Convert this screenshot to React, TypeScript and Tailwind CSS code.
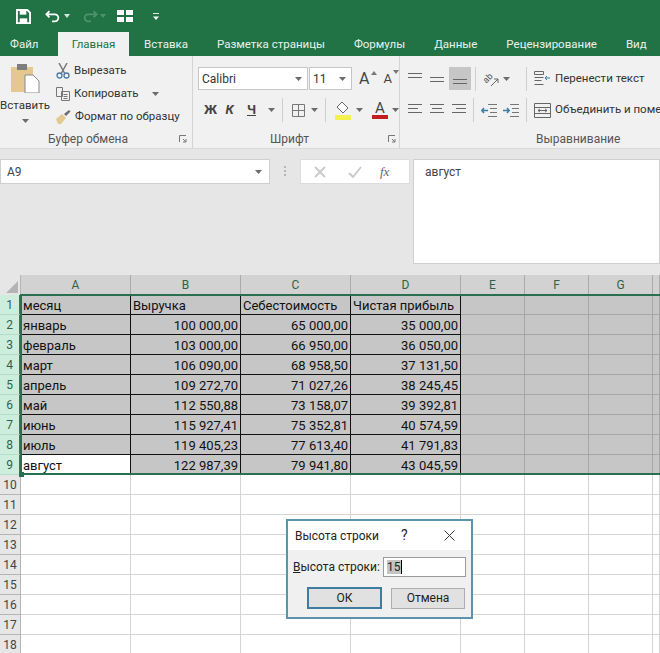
import React from 'react';

const Caret: React.FC<{ className?: string }> = ({ className = '' }) => (
    <svg width="7" height="4" viewBox="0 0 7 4" className={`shrink-0 ${className}`}><path d="M0 0h7L3.500 4z" fill="#6b6b6b" /></svg>
);

const Lines: React.FC<{ rows: [number, number][]; }> = ({ rows }) => (
    <svg width="16" height="14" viewBox="0 0 16 14" className="shrink-0">
        {rows.map(([x, w], i) => <rect key={i} x={x} y={1 + i * 4} width={w} height="1" fill="#666" />)}
    </svg>
);

const Launcher = () => (
    <svg width="8" height="8" viewBox="0 0 8 8" className="shrink-0">
        <path d="M.5 7V.5H7M4 4l3 3M7 4v3H4" fill="none" stroke="#777" />
    </svg>
);

const Sep: React.FC<{ h?: string }> = ({ h = 'h-[24px]' }) => <div className={`w-px bg-[#cfcfcf] shrink-0 ${h}`} />;

const TitleBar = () => (
    <div className="h-[32px] flex items-center pl-[16px]">
        <svg width="15" height="15" viewBox="0 0 16 16" className="shrink-0">
            <path d="M1 1h11l3 3v11H1z" fill="none" stroke="#fff" strokeWidth="2" />
            <rect x="4" y="1" width="7" height="5" fill="#fff" />
            <rect x="4" y="10" width="8" height="5" fill="#fff" />
        </svg>
        <svg width="16" height="15" viewBox="0 0 18 16" className="ml-[14px] shrink-0">
            <path d="M5 2L1.500 5.500 5 9M2 5.500h9a4 4 0 0 1 0 8H8" fill="none" stroke="#fff" strokeWidth="2" />
        </svg>
        <svg width="6" height="4" viewBox="0 0 6 4" className="ml-[3px] shrink-0"><path d="M0 0h6L3 4z" fill="#d5e6dc" /></svg>
        <svg width="16" height="15" viewBox="0 0 18 16" className="ml-[12px] shrink-0">
            <path d="M13 2l3.500 3.500L13 9M16 5.500H7a4 4 0 0 0 0 8h3" fill="none" stroke="#4f9270" strokeWidth="2" />
        </svg>
        <svg width="6" height="4" viewBox="0 0 6 4" className="ml-[2px] shrink-0"><path d="M0 0h6L3 4z" fill="#4f9270" /></svg>
        <svg width="16" height="12" viewBox="0 0 16 12" className="ml-[11px] shrink-0">
            <rect x="0" y="0" width="7" height="5" fill="#fff" /><rect x="9" y="0" width="7" height="5" fill="#fff" />
            <rect x="0" y="7" width="7" height="5" fill="#fff" /><rect x="9" y="7" width="7" height="5" fill="#fff" />
        </svg>
        <svg width="6" height="7" viewBox="0 0 7 8" className="ml-[20px] shrink-0">
            <rect y="0" width="7" height="1" fill="#fff" /><path d="M0 4h7L3.500 8z" fill="#fff" />
        </svg>
    </div>
);

const tabs = ['Вставка', 'Разметка страницы', 'Формулы', 'Данные', 'Рецензирование', 'Вид'];

const Tabs = () => (
    <div className="h-[24px] flex text-[11.5px] text-[#e8f2ec] whitespace-nowrap">
        <div className="w-[58px] pl-[10px] leading-[24px]">Файл</div>
        <div className="w-[71px] bg-[#f1f1f1] text-[#217346] text-center leading-[24px]">Главная</div>
        <div className="flex gap-[29px] pl-[15px] leading-[24px]">
            {tabs.map(t => <span key={t}>{t}</span>)}
        </div>
    </div>
);

const ClipboardGroup = () => (
    <div className="w-[193px] shrink-0 border-r border-[#d4d4d4] flex flex-col">
        <div className="flex flex-1">
            <div className="w-[50px] flex flex-col items-center pt-[7px] shrink-0">
                <svg width="30" height="30" viewBox="0 0 30 30" className="shrink-0">
                    <rect x="1" y="4" width="22" height="25" fill="#e5c88f" />
                    <rect x="7" y="1" width="10" height="6" fill="#7d7d7d" />
                    <path d="M15 12h8l6 6v12H15z" fill="#fff" stroke="#8a8a8a" />
                </svg>
                <span className="mt-[4px] text-[11.5px] leading-[16px]">Вставить</span>
                <Caret className="mt-[6px]" />
            </div>
            <div className="flex flex-col pl-[6px] pt-[3px] text-[11.5px] text-[#333] whitespace-nowrap">
                <div className="h-[23px] flex items-center gap-[4px]">
                    <svg width="14" height="16" viewBox="0 0 14 16" fill="none" className="shrink-0">
                        <path d="M3 0l6 11M11 0L5 11" stroke="#777" strokeWidth="1.500" />
                        <circle cx="3.500" cy="12.500" r="2.500" stroke="#4a7aa5" strokeWidth="1.300" />
                        <circle cx="10.500" cy="12.500" r="2.500" stroke="#4a7aa5" strokeWidth="1.300" />
                    </svg>
                    <span>Вырезать</span>
                </div>
                <div className="h-[23px] flex items-center gap-[4px]">
                    <svg width="14" height="14" viewBox="0 0 14 14" fill="none" stroke="#777" className="shrink-0">
                        <path d="M.5.500h6v9h-6zM5.500 4.500h8v9h-8zM7.500 7.500h4M7.500 9.500h4M7.500 11.500h4" />
                    </svg>
                    <span>Копировать</span>
                    <Caret className="ml-[9px]" />
                </div>
                <div className="h-[23px] flex items-center gap-[4px]">
                    <svg width="15" height="15" viewBox="0 0 15 15" className="shrink-0">
                        <path d="M0 10l6-5 4 4-5 6H2z" fill="#e5c88f" />
                        <path d="M8 5l5-4 1.500 1.500L10 7z" fill="#6b6b6b" />
                    </svg>
                    <span>Формат по образцу</span>
                </div>
            </div>
        </div>
        <div className="h-[18px] flex items-center text-[12px] text-[#555] whitespace-nowrap">
            <span className="w-[135px] pl-[48px] shrink-0">Буфер обмена</span>
            <span className="ml-[44px]"><Launcher /></span>
        </div>
    </div>
);

const Combo: React.FC<{ label: string; w: string }> = ({ label, w }) => (
    <div className={`${w} h-[23px] bg-white border border-[#c6c6c6] flex items-center justify-between pl-[3px] pr-[5px] text-[12px] text-[#333] shrink-0`}>
        <span>{label}</span>
        <Caret />
    </div>
);

const FontGroup = () => (
    <div className="w-[207px] shrink-0 border-r border-[#d4d4d4] flex flex-col">
        <div className="flex-1 pl-[5px] pt-[11px]">
            <div className="flex items-center gap-px">
                <Combo label="Calibri" w="w-[110px]" />
                <Combo label="11" w="w-[43px]" />
                <div className="relative w-[20px] ml-[6px] text-[16px] leading-none text-[#444]">A<svg width="6" height="4" viewBox="0 0 6 4" className="absolute top-0 right-[1px]"><path d="M0 4h6L3 0z" fill="#777" /></svg></div>
                <div className="relative w-[16px] ml-[4px] text-[13px] leading-none text-[#444]">A<svg width="6" height="4" viewBox="0 0 6 4" className="absolute top-[-2px] right-0"><path d="M0 0h6L3 4z" fill="#777" /></svg></div>
            </div>
            <div className="flex items-center mt-[8px] h-[24px] text-[13px] text-[#444] font-bold">
                <span className="w-[12px] ml-[6px] text-center">Ж</span>
                <span className="w-[10px] ml-[9px] text-center italic">К</span>
                <span className="w-[10px] ml-[13px] text-center underline">Ч</span>
                <Caret className="ml-[12px]" />
                <span className="ml-[7px]"><Sep /></span>
                <svg width="13" height="13" viewBox="0 0 13 13" fill="none" stroke="#777" className="ml-[9px] shrink-0"><path d="M.5.500h12v12H.5zM6.500.500v12M.5 6.500h12" /></svg>
                <Caret className="ml-[6px]" />
                <span className="ml-[7px]"><Sep /></span>
                <svg width="16" height="19" viewBox="0 0 16 19" className="ml-[9px] shrink-0">
                    <path d="M7 1l6 6-5 5-6-6z" fill="#fff" stroke="#666" />
                    <rect y="14" width="16" height="5" fill="#f4f04c" />
                </svg>
                <Caret className="ml-[5px]" />
                <div className="ml-[9px] w-[17px] flex flex-col items-center text-[15px] leading-[14px] font-normal text-[#444]">A<div className="w-[16px] h-[4px] bg-[#c0201f]" /></div>
                <Caret className="ml-[4px]" />
            </div>
        </div>
        <div className="h-[18px] flex items-center text-[12px] text-[#555]">
            <span className="w-[184px] pl-[77px] shrink-0">Шрифт</span>
            <span className="ml-[11px]"><Launcher /></span>
        </div>
    </div>
);

const AlignGroup = () => (
    <div className="flex-1 min-w-0 flex flex-col overflow-hidden">
        <div className="flex-1 pl-[8px] pt-[11px] whitespace-nowrap text-[11.5px] text-[#333]">
            <div className="flex items-center h-[23px]">
                <Lines rows={[[0, 14], [0, 14], [0, 0]]} />
                <span className="ml-[6px]"><Lines rows={[[0, 0], [0, 14], [0, 14]]} /></span>
                <div className="ml-[3px] w-[22px] h-[23px] bg-[#c6c6c6] flex items-end justify-center pb-[2px] shrink-0"><Lines rows={[[0, 0], [1, 14], [1, 14]]} /></div>
                <span className="ml-[4px]"><Sep /></span>
                <div className="ml-[7px] w-[16px] h-[16px] flex items-center shrink-0 text-[9px] leading-none text-[#555]">
                    <span className="-rotate-45 inline-block">ab</span>
                    <svg width="8" height="8" viewBox="0 0 8 8" fill="none" stroke="#666" className="-ml-[2px] mt-[6px] shrink-0"><path d="M0 8l7-7M3 1h4v4" /></svg>
                </div>
                <Caret className="ml-[4px]" />
                <span className="ml-[16px]"><Sep /></span>
                <svg width="17" height="15" viewBox="0 0 17 15" fill="none" stroke="#666" className="ml-[7px] shrink-0"><path d="M.5.500h9v3h-9zM.5 6.500h9M.5 9.500h7M.5 13.500h9" /><path d="M16 7h-5M13 5l-2 2 2 2" stroke="#3a7ca5" /></svg>
                <span className="ml-[4px]">Перенести текст</span>
            </div>
            <div className="flex items-center h-[24px] mt-[8px]">
                <Lines rows={[[0, 14], [0, 10], [0, 14]]} />
                <span className="ml-[6px]"><Lines rows={[[0, 14], [2, 10], [0, 14]]} /></span>
                <span className="ml-[6px]"><Lines rows={[[0, 14], [4, 10], [0, 14]]} /></span>
                <span className="ml-[5px]"><Sep /></span>
                <svg width="16" height="13" viewBox="0 0 16 13" fill="none" stroke="#777" className="ml-[7px] shrink-0"><path d="M7 .500h9M9 4.500h7M9 8.500h7M7 12.500h9" /><path d="M7 6.500H1M3 4L.8 6.500 3 9" stroke="#3a7ca5" strokeWidth="1.500" /></svg>
                <svg width="16" height="13" viewBox="0 0 16 13" fill="none" stroke="#777" className="ml-[6px] shrink-0"><path d="M7 .500h9M9 4.500h7M9 8.500h7M7 12.500h9" /><path d="M0 6.500h6M4 4l2.200 2.500L4 9" stroke="#3a7ca5" strokeWidth="1.500" /></svg>
                <span className="ml-[7px]"><Sep /></span>
                <svg width="17" height="15" viewBox="0 0 17 15" fill="none" stroke="#666" className="ml-[7px] shrink-0"><path d="M.5.500h16v14H.5zM.5 4.500h16M.5 10.500h16M4 7.500h9M6 5.800L4 7.500l2 1.700M11 5.800l2 1.700-2 1.700" /></svg>
                <span className="ml-[4px]">Объединить и поместить в центре</span>
            </div>
        </div>
        <div className="h-[18px] flex items-center text-[12px] text-[#555] shrink-0">
            <span className="ml-[136px]">Выравнивание</span>
        </div>
    </div>
);

const FormulaBar = () => (
    <div className="h-[126px] bg-[#e6e6e6] flex items-start pt-[10px] text-[12px] text-[#444]">
        <div className="w-[270px] h-[25px] bg-white border border-[#cfcfcf] flex items-center justify-between pl-[6px] pr-[7px] shrink-0">
            <span>A9</span>
            <Caret />
        </div>
        <div className="w-[30px] h-[25px] flex items-center justify-center shrink-0">
            <svg width="3" height="11" viewBox="0 0 3 11"><path d="M0 0h2v2H0zM0 4h2v2H0zM0 8h2v2H0z" fill="#b5b5b5" /></svg>
        </div>
        <div className="w-[110px] h-[25px] bg-white border border-[#dcdcdc] flex items-center shrink-0">
            <svg width="12" height="12" viewBox="0 0 12 12" className="ml-[13px] shrink-0"><path d="M1 1l10 10M11 1L1 11" stroke="#c8c8c8" strokeWidth="1.800" /></svg>
            <svg width="14" height="12" viewBox="0 0 14 12" className="ml-[22px] shrink-0"><path d="M1 7l4 4 8-10" fill="none" stroke="#c8c8c8" strokeWidth="1.800" /></svg>
            <span className="ml-[18px] italic text-[13px] text-[#666] [font-family:'Liberation_Serif',serif]">fx</span>
        </div>
        <div className="ml-[3px] flex-1 h-[105px] bg-white border border-[#cfcfcf] pl-[11px] pt-[3px] leading-[18px]">август</div>
    </div>
);

const colHeads = ['A', 'B', 'C', 'D', 'E', 'F', 'G', ''];
const rows: string[][] = [
    ['месяц', 'Выручка', 'Себестоимость', 'Чистая прибыль'],
    ['январь', '100 000,00', '65 000,00', '35 000,00'],
    ['февраль', '103 000,00', '66 950,00', '36 050,00'],
    ['март', '106 090,00', '68 958,50', '37 131,50'],
    ['апрель', '109 272,70', '71 027,26', '38 245,45'],
    ['май', '112 550,88', '73 158,07', '39 392,81'],
    ['июнь', '115 927,41', '75 352,81', '40 574,59'],
    ['июль', '119 405,23', '77 613,40', '41 791,83'],
    ['август', '122 987,39', '79 941,80', '43 045,59'],
];

const Sheet = () => (
    <div className="relative grid grid-cols-[21px_110px_110px_110px_110px_64px_64px_64px_7px] auto-rows-[20px] text-[13px] text-[#111] overflow-hidden">
        <div className="bg-[#e6e6e6] border-r border-[#b5b5b5] flex items-end justify-end p-[2px]">
            <svg width="12" height="12" viewBox="0 0 12 12"><path d="M12 0v12H0z" fill="#b4b4b4" /></svg>
        </div>
        {colHeads.map((c, i) => (
            <div key={i} className="bg-[#d2d2d2] border-r border-[#ababab] text-center leading-[20px] text-[12px] text-[#31614a]">{c}</div>
        ))}
        {rows.map((r, ri) => (
            <React.Fragment key={ri}>
                <div className="bg-[#cdeedd] border-r-2 border-b border-[#2f7d57] border-b-[#b5dcc8] text-center leading-[20px] text-[12px] text-[#31614a]">{ri + 1}</div>
                {r.map((v, ci) => {
                    const isActive = ri === 8 && ci === 0;
                    const right = ri > 0 && ci > 0;
                    return (
                        <div key={ci} className={`${isActive ? 'bg-white' : 'bg-[#c6c6c6]'} border-r border-b border-[#111] px-[2px] leading-[21px] whitespace-nowrap overflow-hidden ${right ? 'text-right' : ''}`}>{v}</div>
                    );
                })}
                {[0, 1, 2, 3].map(k => <div key={k} className="bg-[#c6c6c6] border-r border-b border-[#a6a6a6]" />)}
            </React.Fragment>
        ))}
        {Array.from({ length: 9 }, (_, i) => i + 10).map(n => (
            <React.Fragment key={n}>
                <div className="bg-[#e6e6e6] border-r border-b border-[#b5b5b5] text-center leading-[20px] text-[12px] text-[#444]">{n}</div>
                {[0, 1, 2, 3, 4, 5, 6, 7].map(k => <div key={k} className="bg-white border-r border-b border-[#d4d4d4]" />)}
            </React.Fragment>
        ))}
        <div className="absolute left-[20px] top-[19px] right-[-4px] h-[181px] border-2 border-[#2a7050] pointer-events-none" />
        <div className="absolute left-[19px] top-[197px] w-[5px] h-[5px] bg-[#2a7050] pointer-events-none" />
    </div>
);

const RowHeightDialog = () => (
    <div className="absolute left-[286px] top-[519px] w-[187px] h-[100px] border-2 border-[#5d92ad] bg-[#f0f0f0] text-[12px] text-[#222] whitespace-nowrap">
        <div className="h-[29px] bg-white flex items-center pl-[7px]">
            <span className="w-[81px]">Высота строки</span>
            <span className="ml-[25px] w-[6px] text-[14px]">?</span>
            <svg width="11" height="11" viewBox="0 0 11 11" className="ml-[37px] shrink-0"><path d="M.5.500l10 10M10.500.500l-10 10" stroke="#333" /></svg>
        </div>
        <div className="flex items-center pl-[5px] mt-[7px]">
            <span className="w-[81px]"><span className="underline">В</span>ысота строки:</span>
            <div className="ml-[9px] w-[83px] h-[20px] bg-white border border-[#9a9a9a] flex items-center pl-[3px]">
                <span className="bg-[#c4c4c4] leading-[14px]">15</span>
                <span className="w-px h-[14px] bg-black" />
            </div>
        </div>
        <div className="flex items-center mt-[10px] pl-[19px]">
            <button className="w-[75px] h-[22px] bg-[#e1e1e1] border-2 border-[#3f7d9f]">ОК</button>
            <button className="ml-[9px] w-[74px] h-[21px] bg-[#e1e1e1] border border-[#adadad]">Отмена</button>
        </div>
    </div>
);

export default function App() {
    return (
        <div className="relative w-[660px] h-[653px] overflow-hidden bg-white [font-family:Roboto,'Noto_Sans',sans-serif]">
            <div className="bg-[#217346] h-[56px]">
                <TitleBar />
                <Tabs />
            </div>
            <div className="h-[93px] bg-[#f1f1f1] border-b border-[#dadada] flex text-[#333]">
                <ClipboardGroup />
                <FontGroup />
                <AlignGroup />
            </div>
            <FormulaBar />
            <Sheet />
            <RowHeightDialog />
        </div>
    );
}
